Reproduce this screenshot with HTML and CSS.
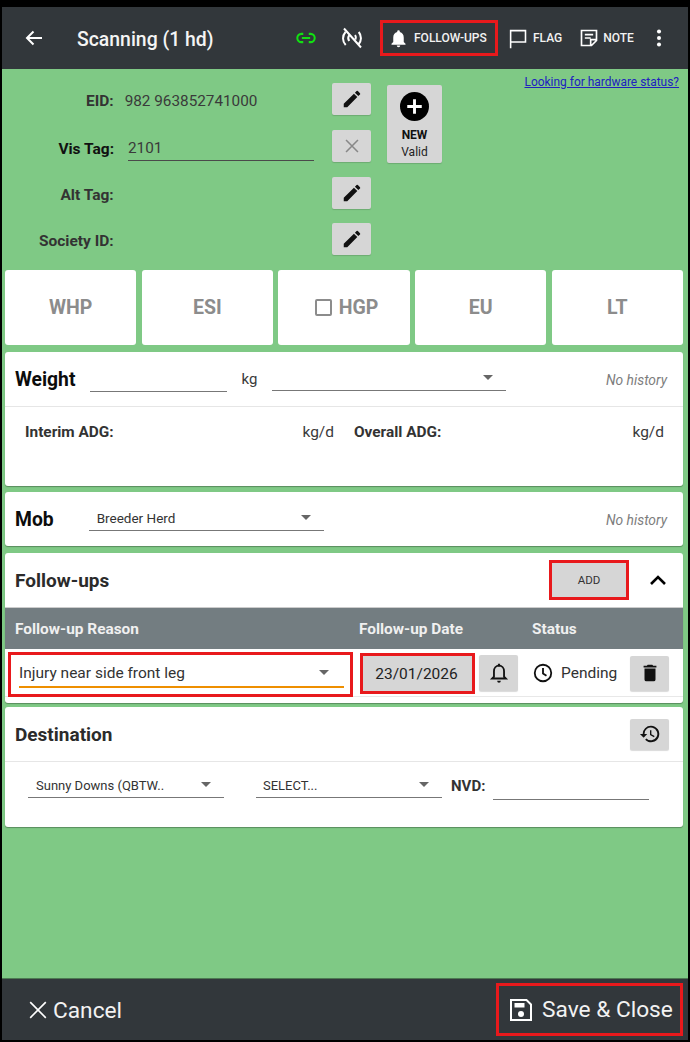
FILE: index.html
```html
<!DOCTYPE html>
<html lang="en">
<head>
<meta charset="utf-8">
<title>Scanning</title>
<link rel="stylesheet" href="styles.css">
</head>
<body>
<div class="screen">
  <header class="topbar">
    <svg class="back" viewBox="0 0 24 24"><path d="M20 12H5M11.500 5.500 5 12l6.500 6.500" fill="none" stroke="#fff" stroke-width="2"/></svg>
    <h1 class="title">Scanning (1 hd)</h1>
    <svg class="ic-link" viewBox="0 0 24 24"><path d="M9 7.500H7a4.500 4.500 0 0 0 0 9h2M15 7.500h2a4.500 4.500 0 0 1 0 9h-2M7.500 12h9" fill="none" stroke="#12e012" stroke-width="2.200"/></svg>
    <svg class="ic-nosignal" viewBox="0 0 24 24"><path d="M5.500 6a9.500 9.500 0 0 0 .2 13M18.500 18.500a9.500 9.500 0 0 0 .2-12.500M9 9.500a5 5 0 0 0 .2 5.500M15.500 13.500a5 5 0 0 0-.4-4.500M4 2.500l17 19" fill="none" stroke="#fff" stroke-width="2"/></svg>
    <div class="action action-marked">
      <svg class="ic-bell" viewBox="0 0 24 24"><path fill="#fff" d="M12 22a2 2 0 0 0 2-2h-4a2 2 0 0 0 2 2zm6-6v-5c0-3.100-1.600-5.600-4.500-6.300V4a1.500 1.500 0 0 0-3 0v.7C7.600 5.400 6 7.900 6 11v5l-2 2v1h16v-1z"/></svg>
      <span>FOLLOW-UPS</span>
    </div>
    <div class="action action-flag">
      <svg class="ic-flag" viewBox="0 0 24 24"><path d="M3 23V3h17v13H3" fill="none" stroke="#fff" stroke-width="1.800"/></svg>
      <span>FLAG</span>
    </div>
    <div class="action action-note">
      <svg class="ic-note" viewBox="0 0 24 24"><path d="M3 3h18v12l-6 6H3zM21 14h-7v7M7 8h10M7 12h7" fill="none" stroke="#fff" stroke-width="2"/></svg>
      <span>NOTE</span>
    </div>
    <svg class="ic-more" viewBox="0 0 24 24"><circle cx="12" cy="5" r="2.200" fill="#fff"/><circle cx="12" cy="12" r="2.200" fill="#fff"/><circle cx="12" cy="19" r="2.200" fill="#fff"/></svg>
  </header>

  <main class="content">
    <section class="ident">
      <div class="fields">
        <div class="field">
          <span class="flabel">EID:</span>
          <span class="fvalue">982 963852741000</span>
          <button class="sq"><svg viewBox="0 0 24 24"><path fill="#111" d="M3 17.200V21h3.800L17.800 9.900l-3.700-3.700zM20.700 7a1 1 0 0 0 0-1.400l-2.300-2.300a1 1 0 0 0-1.400 0l-1.800 1.800 3.700 3.700z"/></svg></button>
        </div>
        <div class="field">
          <span class="flabel flabel-strong">Vis Tag:</span>
          <span class="fvalue finput">2101</span>
          <button class="sq"><svg viewBox="0 0 24 24"><path d="M5.500 5.500l13 13M18.500 5.500l-13 13" stroke="#888" stroke-width="1.700" fill="none"/></svg></button>
        </div>
        <div class="field">
          <span class="flabel">Alt Tag:</span>
          <span class="fvalue"></span>
          <button class="sq"><svg viewBox="0 0 24 24"><path fill="#111" d="M3 17.200V21h3.800L17.800 9.900l-3.700-3.700zM20.700 7a1 1 0 0 0 0-1.400l-2.300-2.300a1 1 0 0 0-1.400 0l-1.800 1.800 3.700 3.700z"/></svg></button>
        </div>
        <div class="field">
          <span class="flabel">Society ID:</span>
          <span class="fvalue"></span>
          <button class="sq"><svg viewBox="0 0 24 24"><path fill="#111" d="M3 17.200V21h3.800L17.800 9.900l-3.700-3.700zM20.700 7a1 1 0 0 0 0-1.400l-2.300-2.300a1 1 0 0 0-1.400 0l-1.800 1.800 3.700 3.700z"/></svg></button>
        </div>
      </div>
      <div class="newbtn">
        <svg viewBox="0 0 30 30"><circle cx="15" cy="15" r="15" fill="#000"/><path d="M15 7.500v15M7.500 15h15" stroke="#fff" stroke-width="3"/></svg>
        <b>NEW</b>
        <span>Valid</span>
      </div>
      <a class="hwlink" href="#">Looking for hardware status?</a>
    </section>

    <section class="tiles">
      <div class="tile">WHP</div>
      <div class="tile">ESI</div>
      <div class="tile"><span class="checkbox"></span>HGP</div>
      <div class="tile">EU</div>
      <div class="tile">LT</div>
    </section>

    <section class="card">
      <div class="row-weight">
        <h2 class="h-black">Weight</h2>
        <span class="line line-weight"></span>
        <span class="unit">kg</span>
        <span class="select select-kg"><i class="caret"></i></span>
        <em class="nohist">No history</em>
      </div>
      <div class="adg">
        <div class="adg-col adg-left"><b>Interim ADG:</b><span>kg/d</span></div>
        <div class="adg-col adg-right"><b>Overall ADG:</b><span>kg/d</span></div>
      </div>
    </section>

    <section class="card card-mob">
      <div class="row-mob">
        <h2 class="h-black">Mob</h2>
        <span class="select select-mob">Breeder Herd<i class="caret"></i></span>
        <em class="nohist">No history</em>
      </div>
    </section>

    <section class="card card-follow">
      <div class="row-follow">
        <h2>Follow-ups</h2>
        <button class="addbtn">ADD</button>
        <svg class="chev" viewBox="0 0 24 24"><path d="M5 16l7-7 7 7" fill="none" stroke="#000" stroke-width="2.600"/></svg>
      </div>
      <div class="thead">
        <span class="th-reason">Follow-up Reason</span>
        <span class="th-date">Follow-up Date</span>
        <span class="th-status">Status</span>
      </div>
      <div class="trow">
        <div class="reason-mark"><div class="reason">Injury near side front leg<i class="caret"></i></div></div>
        <div class="date">23/01/2026</div>
        <button class="sq sq-bell"><svg viewBox="0 0 24 24"><path fill="none" stroke="#111" stroke-width="2" d="M12 4c-3.400 0-5.500 2.600-5.500 6v6l-2 2h15l-2-2v-6c0-3.400-2.100-6-5.500-6z"/><path fill="#111" d="M10 20.500h4a2 2 0 0 1-4 0zM10.800 2h2.400v3h-2.400z"/></svg></button>
        <div class="status">
          <svg viewBox="0 0 24 24"><circle cx="12" cy="12" r="9" fill="none" stroke="#111" stroke-width="2"/><path d="M12 6.500V12.500l3.800 2.400" fill="none" stroke="#111" stroke-width="2"/></svg>
          <span>Pending</span>
        </div>
        <button class="sq sq-trash"><svg viewBox="0 0 24 24"><path fill="#111" d="M6 19a2 2 0 0 0 2 2h8a2 2 0 0 0 2-2V7H6zM19 4h-3.500l-1-1h-5l-1 1H5v2h14z"/></svg></button>
      </div>
    </section>

    <section class="card card-dest">
      <div class="row-dest">
        <h2>Destination</h2>
        <button class="sq sq-hist"><svg viewBox="0 0 24 24"><path fill="#111" d="M13 3a9 9 0 0 0-9 9H1l3.900 3.900.1.100L9 12H6a7 7 0 1 1 2.100 4.900l-1.400 1.400A9 9 0 1 0 13 3zm-1 5v5l4.300 2.500.7-1.200-3.500-2.100V8z"/></svg></button>
      </div>
      <div class="dest-fields">
        <span class="select select-d1">Sunny Downs (QBTW..<i class="caret"></i></span>
        <span class="select select-d2">SELECT...<i class="caret"></i></span>
        <b class="nvd">NVD:</b>
        <span class="line line-nvd"></span>
      </div>
    </section>
  </main>

  <footer class="bottombar">
    <div class="cancel">
      <svg viewBox="0 0 24 24"><path d="M3.500 3.500l17 17M20.500 3.500l-17 17" stroke="#fff" stroke-width="1.800" fill="none"/></svg>
      <span>Cancel</span>
    </div>
    <div class="save">
      <svg viewBox="0 0 24 24"><path d="M2 2h15.500L22 6.500V22H2z" fill="none" stroke="#fff" stroke-width="2"/><path d="M5.500 5h10v4.500h-10z" fill="#fff"/><circle cx="12" cy="16" r="3" fill="#fff"/></svg>
      <span>Save &amp; Close</span>
    </div>
  </footer>
</div>
</body>
</html>
```
FILE: styles.css
```css
* { box-sizing: border-box; }
html, body { margin: 0; padding: 0; }
body { width: 690px; height: 1042px; overflow: hidden; font-family: Roboto, "Liberation Sans", sans-serif; color: #333; background: #000; }
.screen { height: 1042px; padding: 2px; display: flex; flex-direction: column; background: #000; }
h1, h2 { margin: 0; }
button { border: 0; padding: 0; font-family: inherit; }

.topbar { height: 67px; flex: none; background: #32373b; display: flex; align-items: center; color: #fff; border-top: 5px solid #000; }
.back { width: 24px; height: 24px; margin-left: 20px; }
.title { font-size: 19.400px; font-weight: 500; margin-left: 31px; padding-top: 2px; width: 212px; color: #f4f4f4; }
.ic-link { width: 22px; height: 22px; margin-left: 6px; }
.ic-nosignal { width: 24px; height: 24px; margin-left: 23px; }
.action { display: flex; align-items: center; font-size: 12px; font-weight: 500; color: #f2f2f2; height: 36px; }
.action-marked { margin-left: 16px; width: 118px; border: 3px solid #e8191c; padding-left: 5px; gap: 5px; }
.action-flag { margin-left: 10px; gap: 4px; }
.action-note { margin-left: 17px; gap: 4px; }
.ic-bell { width: 21px; height: 21px; }
.ic-flag { width: 21px; height: 21px; }
.ic-note { width: 20px; height: 20px; }
.ic-more { width: 22px; height: 22px; margin-left: 14px; }

.content { flex: 1; background: #7fc985; padding: 0 5px 0 3px; display: flex; flex-direction: column; position: relative; }

.ident { display: flex; height: 201px; position: relative; align-items: flex-start; }
.fields { padding-top: 14px; width: 366px; }
.field { display: flex; align-items: center; height: 32px; margin-bottom: 15px; }
.field:nth-child(3) { margin-bottom: 14px; }
.field:nth-child(4) { margin-bottom: 0; }
.flabel { width: 109px; padding-top: 3px; text-align: right; font-size: 15.500px; font-weight: 700; color: #333; }
.flabel-strong { color: #111; padding-top: 6px; }
.fvalue { width: 208px; margin-left: 11px; margin-right: 0; padding-top: 3px; font-size: 15.300px; color: #3a3a3a; }
.finput { width: 186px; margin-left: 14px; margin-right: 18px; height: 28px; margin-top: 2px; padding-top: 4px; border-bottom: 1px solid #4a4a4a; line-height: 22px; }
.sq { width: 39px; height: 32px; background: #d6d6d6; border-radius: 2px; display: flex; align-items: center; justify-content: center; flex: none; box-shadow: 0 1px 1px rgba(0,0,0,.15); }
.sq svg { width: 22px; height: 22px; }
.newbtn { margin-top: 16px; margin-left: 16px; width: 55px; height: 78px; background: #d6d6d6; border-radius: 2px; display: flex; flex-direction: column; align-items: center; padding-top: 7px; font-size: 12px; color: #222; box-shadow: 0 1px 1px rgba(0,0,0,.15); }
.newbtn svg { width: 29px; height: 29px; margin-bottom: 6px; }
.newbtn b { line-height: 17px; color: #111; font-weight: 700; }
.newbtn span { line-height: 16px; }
.hwlink { position: absolute; right: 4px; top: 6px; font-size: 11.950px; color: #2020c0; text-decoration: underline; }

.tiles { display: flex; gap: 5.300px; height: 75px; flex: none; }
.tile { flex: 1 1 0; min-width: 0; background: #fff; border-radius: 3px; display: flex; align-items: center; justify-content: center; font-size: 19.500px; line-height: 77px; font-weight: 700; color: #8c8c8c; }
.checkbox { width: 17px; height: 17px; border: 2px solid #8c8c8c; border-radius: 2px; margin-left: 5px; margin-right: 7px; }

.card { background: #fff; border-radius: 3px; margin-top: 7px; box-shadow: 0 1px 1px rgba(0,0,0,.3); flex: none; }
.card-mob { margin-top: 6px; }
h2 { font-size: 19px; font-weight: 700; color: #2b2b2b; }
h2.h-black { font-size: 19.300px; color: #0c0c0c; padding-top: 1px; }
.nohist { font-size: 13.800px; color: #7d7d7d; margin-left: auto; margin-right: 16px; padding-top: 1px; font-weight: 400; }

.row-weight { height: 55px; display: flex; align-items: center; padding-left: 10px; border-bottom: 1px solid #e6e6e6; position: relative; }
.line { display: block; border-bottom: 1px solid #777; }
.line-weight { width: 137px; height: 24px; margin-left: 15px; margin-top: 2px; }
.unit { font-size: 15px; margin-left: 14px; color: #3a3a3a; }
.select { position: relative; display: block; font-size: 13.500px; border-bottom: 1px solid #777; color: #333; line-height: 23px; }
.caret { position: absolute; right: 13px; top: 8px; border-left: 5px solid transparent; border-right: 5px solid transparent; border-top: 5px solid #666; }
.select-kg { width: 234px; height: 24px; margin-left: 15px; }
.adg { display: flex; height: 79px; padding-top: 16px; font-size: 15.500px; }
.adg-col { display: flex; justify-content: space-between; color: #3a3a3a; }
.adg-col b { color: #333; font-size: 15.400px; font-weight: 700; }
.adg-left { width: 309px; margin-left: 20px; }
.adg-right { width: 310px; margin-left: 20px; }

.row-mob { height: 54px; display: flex; align-items: center; padding-left: 10px; }
.select-mob { width: 235px; height: 24px; margin-left: 35px; padding-left: 8px; }

.card-follow { height: 150px; margin-top: 7px; }
.row-follow { height: 55px; display: flex; align-items: center; padding-left: 10px; border-bottom: 1px solid #ccc; }
.addbtn { margin-left: auto; width: 80px; height: 40px; background: #d6d6d6; border: 3px solid #e8191c; font-size: 11.500px; color: #333; }
.chev { width: 24px; height: 24px; margin-left: 17px; margin-right: 13px; }
.thead { height: 41px; background: #737d81; display: flex; align-items: center; font-size: 15.400px; font-weight: 700; color: #f0f0f0; padding-left: 10px; }
.th-reason { width: 344px; }
.th-date { width: 173px; }
.trow { height: 47px; display: flex; align-items: center; border-bottom: 1px solid #e8e8e8; margin-top: 1px; position: relative; padding-left: 3px; }
.reason-mark { width: 345px; height: 45px; border: 3px solid #e8191c; padding: 3px 6px 0 8px; margin-top: 2px; }
.reason { position: relative; height: 30px; font-size: 15.500px; line-height: 30px; color: #333; border-bottom: 2px solid #ee8f00; }
.reason .caret { right: 15px; top: 12px; }
.date { width: 115px; height: 41px; background: #d6d6d6; border: 3px solid #e8191c; margin-left: 7px; padding-right: 2px; display: flex; align-items: center; justify-content: center; font-size: 15.500px; color: #222; margin-top: 1px; }
.sq-bell { margin-left: 4px; width: 39px; height: 36px; }
.status { display: flex; align-items: center; margin-left: 14px; width: 98px; font-size: 15.500px; color: #333; gap: 7px; }
.status svg { width: 22px; height: 22px; }
.sq-trash { width: 39px; height: 35px; }

.card-dest { height: 120px; margin-top: 4px; }
.row-dest { height: 55px; display: flex; align-items: center; justify-content: space-between; padding: 0 14px 0 10px; border-bottom: 1px solid #e6e6e6; }
.sq-hist { width: 39px; height: 31px; }
.dest-fields { display: flex; align-items: flex-end; height: 36px; padding-left: 23px; }
.select-d1 { width: 196px; height: 24px; padding-left: 8px; font-size: 13px; }
.select-d2 { width: 186px; height: 24px; margin-left: 32px; padding-left: 7px; font-size: 13px; }
.nvd { font-size: 15px; color: #333; margin-left: 9px; line-height: 24px; }
.line-nvd { width: 156px; height: 26px; margin-left: 8px; margin-bottom: -2px; }

.bottombar { height: 62px; flex: none; background: #32373b; display: flex; align-items: center; justify-content: space-between; color: #f2f2f2; border-top: 1px solid #4d7a52; font-size: 22.700px; padding-left: 25px; }
.cancel { display: flex; align-items: center; gap: 4px; padding-top: 1px; }
.cancel svg { width: 22px; height: 22px; }
.save { display: flex; align-items: center; gap: 9px; width: 187px; height: 53px; border: 3px solid #e8191c; padding-left: 10px; margin-right: 5px; }
.save svg { width: 24px; height: 24px; }
```
